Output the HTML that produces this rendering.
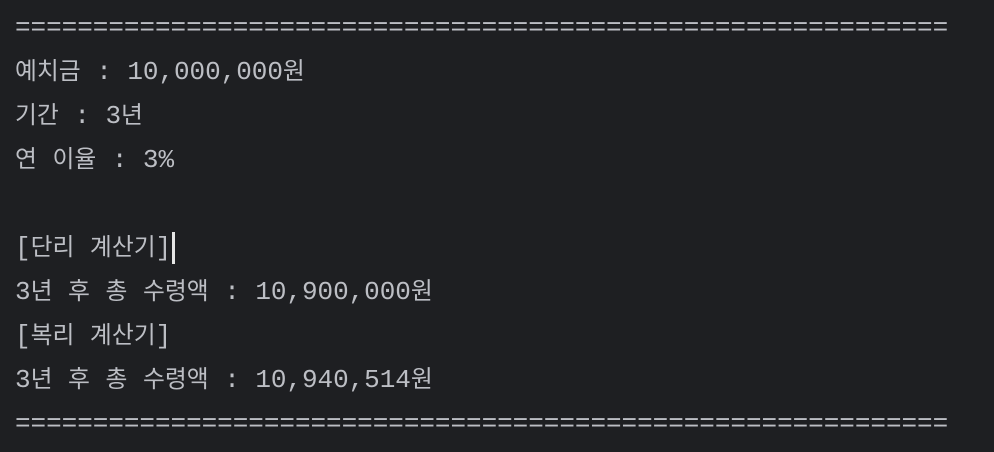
<!DOCTYPE html>
<html><head><meta charset="utf-8"><style>
html,body{margin:0;padding:0;background:#1e1f22;width:994px;height:452px;overflow:hidden}
.w{position:absolute;left:15px;top:6px;font-family:"Liberation Mono","Noto Sans CJK KR",monospace;font-size:26px;letter-spacing:-0.05px;color:#bcbec4;white-space:pre}
.w div{height:44px;line-height:44px;overflow:visible}
.k{font-family:"Noto Sans CJK KR","NanumGothic",sans-serif;font-size:23.8px;letter-spacing:0;line-height:10px}
.c{display:inline-block;width:3px;height:32px;background:#e6e6e6;vertical-align:middle;margin-left:1px;line-height:10px}
</style></head><body><div class="w"><div>============================================================</div><div><span class="k">예치금</span> : 10,000,000<span class="k">원</span></div><div><span class="k">기간</span> : 3<span class="k">년</span></div><div><span class="k">연</span> <span class="k">이율</span> : 3%</div><div> </div><div>[<span class="k">단리</span> <span class="k">계산기</span>]<span class="c"></span></div><div>3<span class="k">년</span> <span class="k">후</span> <span class="k">총</span> <span class="k">수령액</span> : 10,900,000<span class="k">원</span></div><div>[<span class="k">복리</span> <span class="k">계산기</span>]</div><div>3<span class="k">년</span> <span class="k">후</span> <span class="k">총</span> <span class="k">수령액</span> : 10,940,514<span class="k">원</span></div><div>============================================================</div></div></body></html>
